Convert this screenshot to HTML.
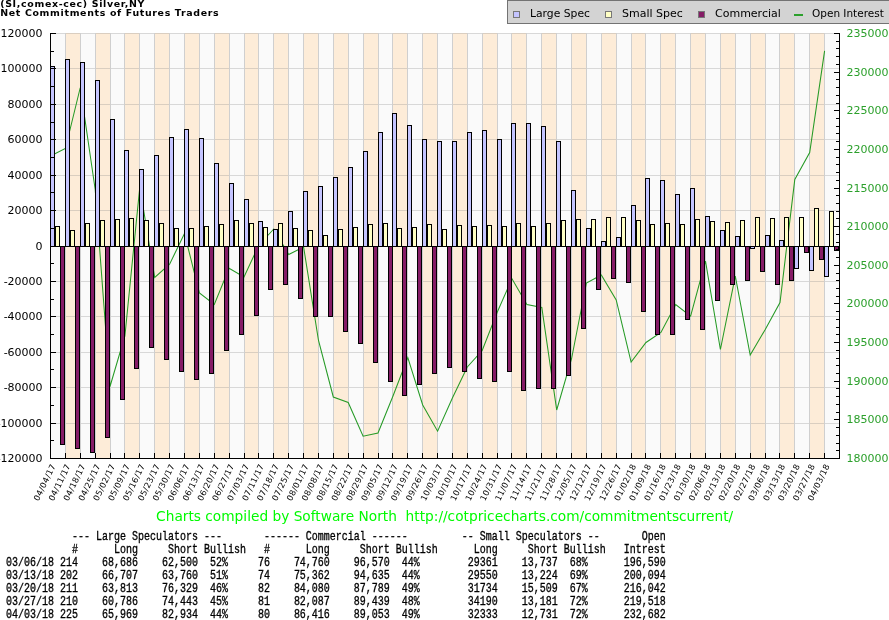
<!DOCTYPE html>
<html><head><meta charset="utf-8"><title>Silver COT</title>
<style>
html,body{margin:0;padding:0;background:#fff}
body{width:889px;height:620px;overflow:hidden;position:relative}
svg{position:absolute;left:0;top:0;will-change:transform}
text{font-family:"DejaVu Sans","Liberation Sans",sans-serif}
.ax{font-size:11px}
.xl{font-size:8.3px;letter-spacing:0.3px}
.tb{position:absolute;left:0;top:530px;margin:0;font-family:"Liberation Mono","DejaVu Sans Mono",monospace;font-size:13.6px;line-height:13px;white-space:pre;color:#000;-webkit-text-stroke:0.35px #000;transform:scaleX(0.7352);transform-origin:0 0}
</style></head><body>
<svg width="889" height="620" viewBox="0 0 889 620">
<rect width="889" height="620" fill="#fff"/>
<g shape-rendering="crispEdges">
<rect x="50" y="33" width="15" height="425" fill="#fafafa"/>
<rect x="65" y="33" width="15" height="425" fill="#fdecd8"/>
<rect x="80" y="33" width="15" height="425" fill="#fafafa"/>
<rect x="95" y="33" width="15" height="425" fill="#fdecd8"/>
<rect x="110" y="33" width="14" height="425" fill="#fafafa"/>
<rect x="124" y="33" width="15" height="425" fill="#fdecd8"/>
<rect x="139" y="33" width="15" height="425" fill="#fafafa"/>
<rect x="154" y="33" width="15" height="425" fill="#fdecd8"/>
<rect x="169" y="33" width="15" height="425" fill="#fafafa"/>
<rect x="184" y="33" width="15" height="425" fill="#fdecd8"/>
<rect x="199" y="33" width="15" height="425" fill="#fafafa"/>
<rect x="214" y="33" width="15" height="425" fill="#fdecd8"/>
<rect x="229" y="33" width="15" height="425" fill="#fafafa"/>
<rect x="244" y="33" width="14" height="425" fill="#fdecd8"/>
<rect x="258" y="33" width="15" height="425" fill="#fafafa"/>
<rect x="273" y="33" width="15" height="425" fill="#fdecd8"/>
<rect x="288" y="33" width="15" height="425" fill="#fafafa"/>
<rect x="303" y="33" width="15" height="425" fill="#fdecd8"/>
<rect x="318" y="33" width="15" height="425" fill="#fafafa"/>
<rect x="333" y="33" width="15" height="425" fill="#fdecd8"/>
<rect x="348" y="33" width="15" height="425" fill="#fafafa"/>
<rect x="363" y="33" width="15" height="425" fill="#fdecd8"/>
<rect x="378" y="33" width="14" height="425" fill="#fafafa"/>
<rect x="392" y="33" width="15" height="425" fill="#fdecd8"/>
<rect x="407" y="33" width="15" height="425" fill="#fafafa"/>
<rect x="422" y="33" width="15" height="425" fill="#fdecd8"/>
<rect x="437" y="33" width="15" height="425" fill="#fafafa"/>
<rect x="452" y="33" width="15" height="425" fill="#fdecd8"/>
<rect x="467" y="33" width="15" height="425" fill="#fafafa"/>
<rect x="482" y="33" width="15" height="425" fill="#fdecd8"/>
<rect x="497" y="33" width="14" height="425" fill="#fafafa"/>
<rect x="511" y="33" width="15" height="425" fill="#fdecd8"/>
<rect x="526" y="33" width="15" height="425" fill="#fafafa"/>
<rect x="541" y="33" width="15" height="425" fill="#fdecd8"/>
<rect x="556" y="33" width="15" height="425" fill="#fafafa"/>
<rect x="571" y="33" width="15" height="425" fill="#fdecd8"/>
<rect x="586" y="33" width="15" height="425" fill="#fafafa"/>
<rect x="601" y="33" width="15" height="425" fill="#fdecd8"/>
<rect x="616" y="33" width="15" height="425" fill="#fafafa"/>
<rect x="631" y="33" width="14" height="425" fill="#fdecd8"/>
<rect x="645" y="33" width="15" height="425" fill="#fafafa"/>
<rect x="660" y="33" width="15" height="425" fill="#fdecd8"/>
<rect x="675" y="33" width="15" height="425" fill="#fafafa"/>
<rect x="690" y="33" width="15" height="425" fill="#fdecd8"/>
<rect x="705" y="33" width="15" height="425" fill="#fafafa"/>
<rect x="720" y="33" width="15" height="425" fill="#fdecd8"/>
<rect x="735" y="33" width="15" height="425" fill="#fafafa"/>
<rect x="750" y="33" width="15" height="425" fill="#fdecd8"/>
<rect x="765" y="33" width="14" height="425" fill="#fafafa"/>
<rect x="779" y="33" width="15" height="425" fill="#fdecd8"/>
<rect x="794" y="33" width="15" height="425" fill="#fafafa"/>
<rect x="809" y="33" width="15" height="425" fill="#fdecd8"/>
<rect x="824" y="33" width="15" height="425" fill="#fafafa"/>
<rect x="50" y="33" width="789" height="1" fill="#808080" fill-opacity="0.28"/>
<rect x="50" y="68" width="789" height="1" fill="#808080" fill-opacity="0.28"/>
<rect x="50" y="104" width="789" height="1" fill="#808080" fill-opacity="0.28"/>
<rect x="50" y="139" width="789" height="1" fill="#808080" fill-opacity="0.28"/>
<rect x="50" y="175" width="789" height="1" fill="#808080" fill-opacity="0.28"/>
<rect x="50" y="210" width="789" height="1" fill="#808080" fill-opacity="0.28"/>
<rect x="50" y="246" width="789" height="1" fill="#808080" fill-opacity="0.28"/>
<rect x="50" y="281" width="789" height="1" fill="#808080" fill-opacity="0.28"/>
<rect x="50" y="316" width="789" height="1" fill="#808080" fill-opacity="0.28"/>
<rect x="50" y="352" width="789" height="1" fill="#808080" fill-opacity="0.28"/>
<rect x="50" y="387" width="789" height="1" fill="#808080" fill-opacity="0.28"/>
<rect x="50" y="423" width="789" height="1" fill="#808080" fill-opacity="0.28"/>
<rect x="50" y="458" width="789" height="1" fill="#808080" fill-opacity="0.28"/>
<rect x="65" y="33" width="1" height="425" fill="#cfcfcf"/>
<rect x="80" y="33" width="1" height="425" fill="#cfcfcf"/>
<rect x="95" y="33" width="1" height="425" fill="#cfcfcf"/>
<rect x="110" y="33" width="1" height="425" fill="#cfcfcf"/>
<rect x="124" y="33" width="1" height="425" fill="#cfcfcf"/>
<rect x="139" y="33" width="1" height="425" fill="#cfcfcf"/>
<rect x="154" y="33" width="1" height="425" fill="#cfcfcf"/>
<rect x="169" y="33" width="1" height="425" fill="#cfcfcf"/>
<rect x="184" y="33" width="1" height="425" fill="#cfcfcf"/>
<rect x="199" y="33" width="1" height="425" fill="#cfcfcf"/>
<rect x="214" y="33" width="1" height="425" fill="#cfcfcf"/>
<rect x="229" y="33" width="1" height="425" fill="#cfcfcf"/>
<rect x="244" y="33" width="1" height="425" fill="#cfcfcf"/>
<rect x="258" y="33" width="1" height="425" fill="#cfcfcf"/>
<rect x="273" y="33" width="1" height="425" fill="#cfcfcf"/>
<rect x="288" y="33" width="1" height="425" fill="#cfcfcf"/>
<rect x="303" y="33" width="1" height="425" fill="#cfcfcf"/>
<rect x="318" y="33" width="1" height="425" fill="#cfcfcf"/>
<rect x="333" y="33" width="1" height="425" fill="#cfcfcf"/>
<rect x="348" y="33" width="1" height="425" fill="#cfcfcf"/>
<rect x="363" y="33" width="1" height="425" fill="#cfcfcf"/>
<rect x="378" y="33" width="1" height="425" fill="#cfcfcf"/>
<rect x="392" y="33" width="1" height="425" fill="#cfcfcf"/>
<rect x="407" y="33" width="1" height="425" fill="#cfcfcf"/>
<rect x="422" y="33" width="1" height="425" fill="#cfcfcf"/>
<rect x="437" y="33" width="1" height="425" fill="#cfcfcf"/>
<rect x="452" y="33" width="1" height="425" fill="#cfcfcf"/>
<rect x="467" y="33" width="1" height="425" fill="#cfcfcf"/>
<rect x="482" y="33" width="1" height="425" fill="#cfcfcf"/>
<rect x="497" y="33" width="1" height="425" fill="#cfcfcf"/>
<rect x="511" y="33" width="1" height="425" fill="#cfcfcf"/>
<rect x="526" y="33" width="1" height="425" fill="#cfcfcf"/>
<rect x="541" y="33" width="1" height="425" fill="#cfcfcf"/>
<rect x="556" y="33" width="1" height="425" fill="#cfcfcf"/>
<rect x="571" y="33" width="1" height="425" fill="#cfcfcf"/>
<rect x="586" y="33" width="1" height="425" fill="#cfcfcf"/>
<rect x="601" y="33" width="1" height="425" fill="#cfcfcf"/>
<rect x="616" y="33" width="1" height="425" fill="#cfcfcf"/>
<rect x="631" y="33" width="1" height="425" fill="#cfcfcf"/>
<rect x="645" y="33" width="1" height="425" fill="#cfcfcf"/>
<rect x="660" y="33" width="1" height="425" fill="#cfcfcf"/>
<rect x="675" y="33" width="1" height="425" fill="#cfcfcf"/>
<rect x="690" y="33" width="1" height="425" fill="#cfcfcf"/>
<rect x="705" y="33" width="1" height="425" fill="#cfcfcf"/>
<rect x="720" y="33" width="1" height="425" fill="#cfcfcf"/>
<rect x="735" y="33" width="1" height="425" fill="#cfcfcf"/>
<rect x="750" y="33" width="1" height="425" fill="#cfcfcf"/>
<rect x="765" y="33" width="1" height="425" fill="#cfcfcf"/>
<rect x="779" y="33" width="1" height="425" fill="#cfcfcf"/>
<rect x="794" y="33" width="1" height="425" fill="#cfcfcf"/>
<rect x="809" y="33" width="1" height="425" fill="#cfcfcf"/>
<rect x="824" y="33" width="1" height="425" fill="#cfcfcf"/>
</g>
<polyline points="50.5,156.0 65.4,148.5 80.3,87.5 95.2,189.5 110.0,386.5 124.9,336.0 139.8,187.0 154.7,277.5 169.6,264.2 184.5,233.5 199.4,293.0 214.3,304.5 229.1,268.2 244.0,277.0 258.9,245.0 273.8,229.0 288.7,254.5 303.6,247.0 318.5,340.5 333.3,397.0 348.2,402.5 363.1,436.2 378.0,433.0 392.9,396.2 407.8,357.5 422.7,405.0 437.6,431.2 452.4,398.0 467.3,367.0 482.2,350.5 497.1,312.5 512.0,278.8 526.9,304.5 541.8,307.5 556.7,410.0 571.5,359.0 586.4,283.0 601.3,275.0 616.2,300.0 631.1,362.0 646.0,342.5 660.9,332.5 675.7,304.5 690.6,316.2 705.5,261.2 720.4,349.5 735.3,276.2 750.2,355.0 765.1,329.7 780.0,302.5 794.8,179.5 809.7,152.6 824.6,50.9" fill="none" stroke="#259a25" stroke-width="1.05"/>
<g shape-rendering="crispEdges" stroke="#000" stroke-width="1">
<rect x="50.5" y="66.5" width="4" height="180" fill="#c4c4ff"/>
<rect x="55.5" y="226.5" width="4" height="20" fill="#ffffc4"/>
<rect x="60.5" y="246.5" width="4" height="198" fill="#851c66"/>
<rect x="65.5" y="59.5" width="4" height="187" fill="#c4c4ff"/>
<rect x="70.5" y="230.5" width="4" height="16" fill="#ffffc4"/>
<rect x="75.5" y="246.5" width="4" height="202" fill="#851c66"/>
<rect x="80.5" y="62.5" width="4" height="184" fill="#c4c4ff"/>
<rect x="85.5" y="223.5" width="4" height="23" fill="#ffffc4"/>
<rect x="90.5" y="246.5" width="4" height="206" fill="#851c66"/>
<rect x="95.5" y="80.5" width="4" height="166" fill="#c4c4ff"/>
<rect x="100.5" y="220.5" width="4" height="26" fill="#ffffc4"/>
<rect x="105.5" y="246.5" width="4" height="191" fill="#851c66"/>
<rect x="110.5" y="119.5" width="4" height="127" fill="#c4c4ff"/>
<rect x="115.5" y="219.5" width="4" height="27" fill="#ffffc4"/>
<rect x="120.5" y="246.5" width="4" height="153" fill="#851c66"/>
<rect x="124.5" y="150.5" width="4" height="96" fill="#c4c4ff"/>
<rect x="129.5" y="218.5" width="4" height="28" fill="#ffffc4"/>
<rect x="134.5" y="246.5" width="4" height="122" fill="#851c66"/>
<rect x="139.5" y="169.5" width="4" height="77" fill="#c4c4ff"/>
<rect x="144.5" y="220.5" width="4" height="26" fill="#ffffc4"/>
<rect x="149.5" y="246.5" width="4" height="101" fill="#851c66"/>
<rect x="154.5" y="155.5" width="4" height="91" fill="#c4c4ff"/>
<rect x="159.5" y="223.5" width="4" height="23" fill="#ffffc4"/>
<rect x="164.5" y="246.5" width="4" height="113" fill="#851c66"/>
<rect x="169.5" y="137.5" width="4" height="109" fill="#c4c4ff"/>
<rect x="174.5" y="228.5" width="4" height="18" fill="#ffffc4"/>
<rect x="179.5" y="246.5" width="4" height="125" fill="#851c66"/>
<rect x="184.5" y="129.5" width="4" height="117" fill="#c4c4ff"/>
<rect x="189.5" y="228.5" width="4" height="18" fill="#ffffc4"/>
<rect x="194.5" y="246.5" width="4" height="133" fill="#851c66"/>
<rect x="199.5" y="138.5" width="4" height="108" fill="#c4c4ff"/>
<rect x="204.5" y="226.5" width="4" height="20" fill="#ffffc4"/>
<rect x="209.5" y="246.5" width="4" height="127" fill="#851c66"/>
<rect x="214.5" y="163.5" width="4" height="83" fill="#c4c4ff"/>
<rect x="219.5" y="224.5" width="4" height="22" fill="#ffffc4"/>
<rect x="224.5" y="246.5" width="4" height="104" fill="#851c66"/>
<rect x="229.5" y="183.5" width="4" height="63" fill="#c4c4ff"/>
<rect x="234.5" y="220.5" width="4" height="26" fill="#ffffc4"/>
<rect x="239.5" y="246.5" width="4" height="88" fill="#851c66"/>
<rect x="244.5" y="199.5" width="4" height="47" fill="#c4c4ff"/>
<rect x="249.5" y="223.5" width="4" height="23" fill="#ffffc4"/>
<rect x="254.5" y="246.5" width="4" height="69" fill="#851c66"/>
<rect x="258.5" y="221.5" width="4" height="25" fill="#c4c4ff"/>
<rect x="263.5" y="227.5" width="4" height="19" fill="#ffffc4"/>
<rect x="268.5" y="246.5" width="4" height="43" fill="#851c66"/>
<rect x="273.5" y="229.5" width="4" height="17" fill="#c4c4ff"/>
<rect x="278.5" y="223.5" width="4" height="23" fill="#ffffc4"/>
<rect x="283.5" y="246.5" width="4" height="38" fill="#851c66"/>
<rect x="288.5" y="211.5" width="4" height="35" fill="#c4c4ff"/>
<rect x="293.5" y="228.5" width="4" height="18" fill="#ffffc4"/>
<rect x="298.5" y="246.5" width="4" height="52" fill="#851c66"/>
<rect x="303.5" y="191.5" width="4" height="55" fill="#c4c4ff"/>
<rect x="308.5" y="230.5" width="4" height="16" fill="#ffffc4"/>
<rect x="313.5" y="246.5" width="4" height="70" fill="#851c66"/>
<rect x="318.5" y="186.5" width="4" height="60" fill="#c4c4ff"/>
<rect x="323.5" y="235.5" width="4" height="11" fill="#ffffc4"/>
<rect x="328.5" y="246.5" width="4" height="70" fill="#851c66"/>
<rect x="333.5" y="177.5" width="4" height="69" fill="#c4c4ff"/>
<rect x="338.5" y="229.5" width="4" height="17" fill="#ffffc4"/>
<rect x="343.5" y="246.5" width="4" height="85" fill="#851c66"/>
<rect x="348.5" y="167.5" width="4" height="79" fill="#c4c4ff"/>
<rect x="353.5" y="227.5" width="4" height="19" fill="#ffffc4"/>
<rect x="358.5" y="246.5" width="4" height="97" fill="#851c66"/>
<rect x="363.5" y="151.5" width="4" height="95" fill="#c4c4ff"/>
<rect x="368.5" y="224.5" width="4" height="22" fill="#ffffc4"/>
<rect x="373.5" y="246.5" width="4" height="116" fill="#851c66"/>
<rect x="378.5" y="132.5" width="4" height="114" fill="#c4c4ff"/>
<rect x="383.5" y="223.5" width="4" height="23" fill="#ffffc4"/>
<rect x="388.5" y="246.5" width="4" height="135" fill="#851c66"/>
<rect x="392.5" y="113.5" width="4" height="133" fill="#c4c4ff"/>
<rect x="397.5" y="228.5" width="4" height="18" fill="#ffffc4"/>
<rect x="402.5" y="246.5" width="4" height="149" fill="#851c66"/>
<rect x="407.5" y="125.5" width="4" height="121" fill="#c4c4ff"/>
<rect x="412.5" y="227.5" width="4" height="19" fill="#ffffc4"/>
<rect x="417.5" y="246.5" width="4" height="138" fill="#851c66"/>
<rect x="422.5" y="139.5" width="4" height="107" fill="#c4c4ff"/>
<rect x="427.5" y="224.5" width="4" height="22" fill="#ffffc4"/>
<rect x="432.5" y="246.5" width="4" height="127" fill="#851c66"/>
<rect x="437.5" y="141.5" width="4" height="105" fill="#c4c4ff"/>
<rect x="442.5" y="229.5" width="4" height="17" fill="#ffffc4"/>
<rect x="447.5" y="246.5" width="4" height="121" fill="#851c66"/>
<rect x="452.5" y="141.5" width="4" height="105" fill="#c4c4ff"/>
<rect x="457.5" y="225.5" width="4" height="21" fill="#ffffc4"/>
<rect x="462.5" y="246.5" width="4" height="125" fill="#851c66"/>
<rect x="467.5" y="132.5" width="4" height="114" fill="#c4c4ff"/>
<rect x="472.5" y="226.5" width="4" height="20" fill="#ffffc4"/>
<rect x="477.5" y="246.5" width="4" height="132" fill="#851c66"/>
<rect x="482.5" y="130.5" width="4" height="116" fill="#c4c4ff"/>
<rect x="487.5" y="225.5" width="4" height="21" fill="#ffffc4"/>
<rect x="492.5" y="246.5" width="4" height="135" fill="#851c66"/>
<rect x="497.5" y="139.5" width="4" height="107" fill="#c4c4ff"/>
<rect x="502.5" y="226.5" width="4" height="20" fill="#ffffc4"/>
<rect x="507.5" y="246.5" width="4" height="125" fill="#851c66"/>
<rect x="511.5" y="123.5" width="4" height="123" fill="#c4c4ff"/>
<rect x="516.5" y="223.5" width="4" height="23" fill="#ffffc4"/>
<rect x="521.5" y="246.5" width="4" height="144" fill="#851c66"/>
<rect x="526.5" y="123.5" width="4" height="123" fill="#c4c4ff"/>
<rect x="531.5" y="226.5" width="4" height="20" fill="#ffffc4"/>
<rect x="536.5" y="246.5" width="4" height="142" fill="#851c66"/>
<rect x="541.5" y="126.5" width="4" height="120" fill="#c4c4ff"/>
<rect x="546.5" y="223.5" width="4" height="23" fill="#ffffc4"/>
<rect x="551.5" y="246.5" width="4" height="142" fill="#851c66"/>
<rect x="556.5" y="141.5" width="4" height="105" fill="#c4c4ff"/>
<rect x="561.5" y="220.5" width="4" height="26" fill="#ffffc4"/>
<rect x="566.5" y="246.5" width="4" height="129" fill="#851c66"/>
<rect x="571.5" y="190.5" width="4" height="56" fill="#c4c4ff"/>
<rect x="576.5" y="219.5" width="4" height="27" fill="#ffffc4"/>
<rect x="581.5" y="246.5" width="4" height="82" fill="#851c66"/>
<rect x="586.5" y="228.5" width="4" height="18" fill="#c4c4ff"/>
<rect x="591.5" y="219.5" width="4" height="27" fill="#ffffc4"/>
<rect x="596.5" y="246.5" width="4" height="43" fill="#851c66"/>
<rect x="601.5" y="241.5" width="4" height="5" fill="#c4c4ff"/>
<rect x="606.5" y="217.5" width="4" height="29" fill="#ffffc4"/>
<rect x="611.5" y="246.5" width="4" height="32" fill="#851c66"/>
<rect x="616.5" y="237.5" width="4" height="9" fill="#c4c4ff"/>
<rect x="621.5" y="217.5" width="4" height="29" fill="#ffffc4"/>
<rect x="626.5" y="246.5" width="4" height="36" fill="#851c66"/>
<rect x="631.5" y="205.5" width="4" height="41" fill="#c4c4ff"/>
<rect x="636.5" y="220.5" width="4" height="26" fill="#ffffc4"/>
<rect x="641.5" y="246.5" width="4" height="65" fill="#851c66"/>
<rect x="645.5" y="178.5" width="4" height="68" fill="#c4c4ff"/>
<rect x="650.5" y="224.5" width="4" height="22" fill="#ffffc4"/>
<rect x="655.5" y="246.5" width="4" height="88" fill="#851c66"/>
<rect x="660.5" y="180.5" width="4" height="66" fill="#c4c4ff"/>
<rect x="665.5" y="223.5" width="4" height="23" fill="#ffffc4"/>
<rect x="670.5" y="246.5" width="4" height="88" fill="#851c66"/>
<rect x="675.5" y="194.5" width="4" height="52" fill="#c4c4ff"/>
<rect x="680.5" y="224.5" width="4" height="22" fill="#ffffc4"/>
<rect x="685.5" y="246.5" width="4" height="73" fill="#851c66"/>
<rect x="690.5" y="188.5" width="4" height="58" fill="#c4c4ff"/>
<rect x="695.5" y="219.5" width="4" height="27" fill="#ffffc4"/>
<rect x="700.5" y="246.5" width="4" height="83" fill="#851c66"/>
<rect x="705.5" y="216.5" width="4" height="30" fill="#c4c4ff"/>
<rect x="710.5" y="221.5" width="4" height="25" fill="#ffffc4"/>
<rect x="715.5" y="246.5" width="4" height="54" fill="#851c66"/>
<rect x="720.5" y="230.5" width="4" height="16" fill="#c4c4ff"/>
<rect x="725.5" y="222.5" width="4" height="24" fill="#ffffc4"/>
<rect x="730.5" y="246.5" width="4" height="38" fill="#851c66"/>
<rect x="735.5" y="236.5" width="4" height="10" fill="#c4c4ff"/>
<rect x="740.5" y="220.5" width="4" height="26" fill="#ffffc4"/>
<rect x="745.5" y="246.5" width="4" height="34" fill="#851c66"/>
<rect x="750.5" y="246.5" width="4" height="2" fill="#c4c4ff"/>
<rect x="755.5" y="217.5" width="4" height="29" fill="#ffffc4"/>
<rect x="760.5" y="246.5" width="4" height="25" fill="#851c66"/>
<rect x="765.5" y="235.5" width="4" height="11" fill="#c4c4ff"/>
<rect x="770.5" y="218.5" width="4" height="28" fill="#ffffc4"/>
<rect x="775.5" y="246.5" width="4" height="38" fill="#851c66"/>
<rect x="779.5" y="240.5" width="4" height="6" fill="#c4c4ff"/>
<rect x="784.5" y="217.5" width="4" height="29" fill="#ffffc4"/>
<rect x="789.5" y="246.5" width="4" height="34" fill="#851c66"/>
<rect x="794.5" y="246.5" width="4" height="22" fill="#c4c4ff"/>
<rect x="799.5" y="217.5" width="4" height="29" fill="#ffffc4"/>
<rect x="804.5" y="246.5" width="4" height="6" fill="#851c66"/>
<rect x="809.5" y="246.5" width="4" height="24" fill="#c4c4ff"/>
<rect x="814.5" y="208.5" width="4" height="38" fill="#ffffc4"/>
<rect x="819.5" y="246.5" width="4" height="13" fill="#851c66"/>
<rect x="824.5" y="246.5" width="4" height="30" fill="#c4c4ff"/>
<rect x="829.5" y="211.5" width="4" height="35" fill="#ffffc4"/>
<rect x="834.5" y="246.5" width="4" height="4" fill="#851c66"/>
</g>
<g shape-rendering="crispEdges" fill="#000">
<rect x="50" y="246" width="789" height="1"/>
<rect x="50" y="33" width="1" height="426"/>
<rect x="50" y="458" width="790" height="1"/>
<rect x="839" y="33" width="1" height="426"/>
<rect x="51" y="33" width="5" height="1"/>
<rect x="51" y="51" width="3" height="1"/>
<rect x="51" y="68" width="5" height="1"/>
<rect x="51" y="86" width="3" height="1"/>
<rect x="51" y="104" width="5" height="1"/>
<rect x="51" y="122" width="3" height="1"/>
<rect x="51" y="139" width="5" height="1"/>
<rect x="51" y="157" width="3" height="1"/>
<rect x="51" y="175" width="5" height="1"/>
<rect x="51" y="192" width="3" height="1"/>
<rect x="51" y="210" width="5" height="1"/>
<rect x="51" y="228" width="3" height="1"/>
<rect x="51" y="246" width="5" height="1"/>
<rect x="51" y="263" width="3" height="1"/>
<rect x="51" y="281" width="5" height="1"/>
<rect x="51" y="299" width="3" height="1"/>
<rect x="51" y="316" width="5" height="1"/>
<rect x="51" y="334" width="3" height="1"/>
<rect x="51" y="352" width="5" height="1"/>
<rect x="51" y="369" width="3" height="1"/>
<rect x="51" y="387" width="5" height="1"/>
<rect x="51" y="405" width="3" height="1"/>
<rect x="51" y="423" width="5" height="1"/>
<rect x="51" y="440" width="3" height="1"/>
<rect x="51" y="458" width="5" height="1"/>
<rect x="834" y="33" width="5" height="1"/>
<rect x="836" y="41" width="3" height="1"/>
<rect x="836" y="48" width="3" height="1"/>
<rect x="836" y="56" width="3" height="1"/>
<rect x="836" y="64" width="3" height="1"/>
<rect x="834" y="72" width="5" height="1"/>
<rect x="836" y="79" width="3" height="1"/>
<rect x="836" y="87" width="3" height="1"/>
<rect x="836" y="95" width="3" height="1"/>
<rect x="836" y="103" width="3" height="1"/>
<rect x="834" y="110" width="5" height="1"/>
<rect x="836" y="118" width="3" height="1"/>
<rect x="836" y="126" width="3" height="1"/>
<rect x="836" y="133" width="3" height="1"/>
<rect x="836" y="141" width="3" height="1"/>
<rect x="834" y="149" width="5" height="1"/>
<rect x="836" y="157" width="3" height="1"/>
<rect x="836" y="164" width="3" height="1"/>
<rect x="836" y="172" width="3" height="1"/>
<rect x="836" y="180" width="3" height="1"/>
<rect x="834" y="188" width="5" height="1"/>
<rect x="836" y="195" width="3" height="1"/>
<rect x="836" y="203" width="3" height="1"/>
<rect x="836" y="211" width="3" height="1"/>
<rect x="836" y="218" width="3" height="1"/>
<rect x="834" y="226" width="5" height="1"/>
<rect x="836" y="234" width="3" height="1"/>
<rect x="836" y="242" width="3" height="1"/>
<rect x="836" y="249" width="3" height="1"/>
<rect x="836" y="257" width="3" height="1"/>
<rect x="834" y="265" width="5" height="1"/>
<rect x="836" y="273" width="3" height="1"/>
<rect x="836" y="280" width="3" height="1"/>
<rect x="836" y="288" width="3" height="1"/>
<rect x="836" y="296" width="3" height="1"/>
<rect x="834" y="303" width="5" height="1"/>
<rect x="836" y="311" width="3" height="1"/>
<rect x="836" y="319" width="3" height="1"/>
<rect x="836" y="327" width="3" height="1"/>
<rect x="836" y="334" width="3" height="1"/>
<rect x="834" y="342" width="5" height="1"/>
<rect x="836" y="350" width="3" height="1"/>
<rect x="836" y="358" width="3" height="1"/>
<rect x="836" y="365" width="3" height="1"/>
<rect x="836" y="373" width="3" height="1"/>
<rect x="834" y="381" width="5" height="1"/>
<rect x="836" y="388" width="3" height="1"/>
<rect x="836" y="396" width="3" height="1"/>
<rect x="836" y="404" width="3" height="1"/>
<rect x="836" y="412" width="3" height="1"/>
<rect x="834" y="419" width="5" height="1"/>
<rect x="836" y="427" width="3" height="1"/>
<rect x="836" y="435" width="3" height="1"/>
<rect x="836" y="443" width="3" height="1"/>
<rect x="836" y="450" width="3" height="1"/>
<rect x="834" y="458" width="5" height="1"/>
<rect x="65" y="453" width="1" height="5"/>
<rect x="80" y="453" width="1" height="5"/>
<rect x="95" y="453" width="1" height="5"/>
<rect x="110" y="453" width="1" height="5"/>
<rect x="124" y="453" width="1" height="5"/>
<rect x="139" y="453" width="1" height="5"/>
<rect x="154" y="453" width="1" height="5"/>
<rect x="169" y="453" width="1" height="5"/>
<rect x="184" y="453" width="1" height="5"/>
<rect x="199" y="453" width="1" height="5"/>
<rect x="214" y="453" width="1" height="5"/>
<rect x="229" y="453" width="1" height="5"/>
<rect x="244" y="453" width="1" height="5"/>
<rect x="258" y="453" width="1" height="5"/>
<rect x="273" y="453" width="1" height="5"/>
<rect x="288" y="453" width="1" height="5"/>
<rect x="303" y="453" width="1" height="5"/>
<rect x="318" y="453" width="1" height="5"/>
<rect x="333" y="453" width="1" height="5"/>
<rect x="348" y="453" width="1" height="5"/>
<rect x="363" y="453" width="1" height="5"/>
<rect x="378" y="453" width="1" height="5"/>
<rect x="392" y="453" width="1" height="5"/>
<rect x="407" y="453" width="1" height="5"/>
<rect x="422" y="453" width="1" height="5"/>
<rect x="437" y="453" width="1" height="5"/>
<rect x="452" y="453" width="1" height="5"/>
<rect x="467" y="453" width="1" height="5"/>
<rect x="482" y="453" width="1" height="5"/>
<rect x="497" y="453" width="1" height="5"/>
<rect x="511" y="453" width="1" height="5"/>
<rect x="526" y="453" width="1" height="5"/>
<rect x="541" y="453" width="1" height="5"/>
<rect x="556" y="453" width="1" height="5"/>
<rect x="571" y="453" width="1" height="5"/>
<rect x="586" y="453" width="1" height="5"/>
<rect x="601" y="453" width="1" height="5"/>
<rect x="616" y="453" width="1" height="5"/>
<rect x="631" y="453" width="1" height="5"/>
<rect x="645" y="453" width="1" height="5"/>
<rect x="660" y="453" width="1" height="5"/>
<rect x="675" y="453" width="1" height="5"/>
<rect x="690" y="453" width="1" height="5"/>
<rect x="705" y="453" width="1" height="5"/>
<rect x="720" y="453" width="1" height="5"/>
<rect x="735" y="453" width="1" height="5"/>
<rect x="750" y="453" width="1" height="5"/>
<rect x="765" y="453" width="1" height="5"/>
<rect x="779" y="453" width="1" height="5"/>
<rect x="794" y="453" width="1" height="5"/>
<rect x="809" y="453" width="1" height="5"/>
<rect x="824" y="453" width="1" height="5"/>
</g>
<text class="ax" x="42.6" y="37.0" text-anchor="end">120000</text>
<text class="ax" x="42.6" y="72.0" text-anchor="end">100000</text>
<text class="ax" x="42.6" y="108.0" text-anchor="end">80000</text>
<text class="ax" x="42.6" y="143.0" text-anchor="end">60000</text>
<text class="ax" x="42.6" y="179.0" text-anchor="end">40000</text>
<text class="ax" x="42.6" y="214.0" text-anchor="end">20000</text>
<text class="ax" x="42.6" y="250.0" text-anchor="end">0</text>
<text class="ax" x="42.6" y="285.0" text-anchor="end">-20000</text>
<text class="ax" x="42.6" y="320.0" text-anchor="end">-40000</text>
<text class="ax" x="42.6" y="356.0" text-anchor="end">-60000</text>
<text class="ax" x="42.6" y="391.0" text-anchor="end">-80000</text>
<text class="ax" x="42.6" y="427.0" text-anchor="end">-100000</text>
<text class="ax" x="42.6" y="462.0" text-anchor="end">-120000</text>
<text class="ax" x="846.4" y="37.0" fill="#2ca02c">235000</text>
<text class="ax" x="846.4" y="76.0" fill="#2ca02c">230000</text>
<text class="ax" x="846.4" y="114.0" fill="#2ca02c">225000</text>
<text class="ax" x="846.4" y="153.0" fill="#2ca02c">220000</text>
<text class="ax" x="846.4" y="192.0" fill="#2ca02c">215000</text>
<text class="ax" x="846.4" y="230.0" fill="#2ca02c">210000</text>
<text class="ax" x="846.4" y="269.0" fill="#2ca02c">205000</text>
<text class="ax" x="846.4" y="307.0" fill="#2ca02c">200000</text>
<text class="ax" x="846.4" y="346.0" fill="#2ca02c">195000</text>
<text class="ax" x="846.4" y="385.0" fill="#2ca02c">190000</text>
<text class="ax" x="846.4" y="423.0" fill="#2ca02c">185000</text>
<text class="ax" x="846.4" y="462.0" fill="#2ca02c">180000</text>
<text class="xl" transform="translate(55.9,465.8) rotate(-64)" text-anchor="end">04/04/17</text>
<text class="xl" transform="translate(70.8,465.8) rotate(-64)" text-anchor="end">04/11/17</text>
<text class="xl" transform="translate(85.7,465.8) rotate(-64)" text-anchor="end">04/18/17</text>
<text class="xl" transform="translate(100.6,465.8) rotate(-64)" text-anchor="end">04/25/17</text>
<text class="xl" transform="translate(115.4,465.8) rotate(-64)" text-anchor="end">05/02/17</text>
<text class="xl" transform="translate(130.3,465.8) rotate(-64)" text-anchor="end">05/09/17</text>
<text class="xl" transform="translate(145.2,465.8) rotate(-64)" text-anchor="end">05/16/17</text>
<text class="xl" transform="translate(160.1,465.8) rotate(-64)" text-anchor="end">05/23/17</text>
<text class="xl" transform="translate(175.0,465.8) rotate(-64)" text-anchor="end">05/30/17</text>
<text class="xl" transform="translate(189.9,465.8) rotate(-64)" text-anchor="end">06/06/17</text>
<text class="xl" transform="translate(204.8,465.8) rotate(-64)" text-anchor="end">06/13/17</text>
<text class="xl" transform="translate(219.7,465.8) rotate(-64)" text-anchor="end">06/20/17</text>
<text class="xl" transform="translate(234.5,465.8) rotate(-64)" text-anchor="end">06/27/17</text>
<text class="xl" transform="translate(249.4,465.8) rotate(-64)" text-anchor="end">07/03/17</text>
<text class="xl" transform="translate(264.3,465.8) rotate(-64)" text-anchor="end">07/11/17</text>
<text class="xl" transform="translate(279.2,465.8) rotate(-64)" text-anchor="end">07/18/17</text>
<text class="xl" transform="translate(294.1,465.8) rotate(-64)" text-anchor="end">07/25/17</text>
<text class="xl" transform="translate(309.0,465.8) rotate(-64)" text-anchor="end">08/01/17</text>
<text class="xl" transform="translate(323.9,465.8) rotate(-64)" text-anchor="end">08/08/17</text>
<text class="xl" transform="translate(338.7,465.8) rotate(-64)" text-anchor="end">08/15/17</text>
<text class="xl" transform="translate(353.6,465.8) rotate(-64)" text-anchor="end">08/22/17</text>
<text class="xl" transform="translate(368.5,465.8) rotate(-64)" text-anchor="end">08/29/17</text>
<text class="xl" transform="translate(383.4,465.8) rotate(-64)" text-anchor="end">09/05/17</text>
<text class="xl" transform="translate(398.3,465.8) rotate(-64)" text-anchor="end">09/12/17</text>
<text class="xl" transform="translate(413.2,465.8) rotate(-64)" text-anchor="end">09/19/17</text>
<text class="xl" transform="translate(428.1,465.8) rotate(-64)" text-anchor="end">09/26/17</text>
<text class="xl" transform="translate(443.0,465.8) rotate(-64)" text-anchor="end">10/03/17</text>
<text class="xl" transform="translate(457.8,465.8) rotate(-64)" text-anchor="end">10/10/17</text>
<text class="xl" transform="translate(472.7,465.8) rotate(-64)" text-anchor="end">10/17/17</text>
<text class="xl" transform="translate(487.6,465.8) rotate(-64)" text-anchor="end">10/24/17</text>
<text class="xl" transform="translate(502.5,465.8) rotate(-64)" text-anchor="end">10/31/17</text>
<text class="xl" transform="translate(517.4,465.8) rotate(-64)" text-anchor="end">11/07/17</text>
<text class="xl" transform="translate(532.3,465.8) rotate(-64)" text-anchor="end">11/14/17</text>
<text class="xl" transform="translate(547.2,465.8) rotate(-64)" text-anchor="end">11/21/17</text>
<text class="xl" transform="translate(562.1,465.8) rotate(-64)" text-anchor="end">11/28/17</text>
<text class="xl" transform="translate(576.9,465.8) rotate(-64)" text-anchor="end">12/05/17</text>
<text class="xl" transform="translate(591.8,465.8) rotate(-64)" text-anchor="end">12/12/17</text>
<text class="xl" transform="translate(606.7,465.8) rotate(-64)" text-anchor="end">12/19/17</text>
<text class="xl" transform="translate(621.6,465.8) rotate(-64)" text-anchor="end">12/26/17</text>
<text class="xl" transform="translate(636.5,465.8) rotate(-64)" text-anchor="end">01/02/18</text>
<text class="xl" transform="translate(651.4,465.8) rotate(-64)" text-anchor="end">01/09/18</text>
<text class="xl" transform="translate(666.3,465.8) rotate(-64)" text-anchor="end">01/16/18</text>
<text class="xl" transform="translate(681.1,465.8) rotate(-64)" text-anchor="end">01/23/18</text>
<text class="xl" transform="translate(696.0,465.8) rotate(-64)" text-anchor="end">01/30/18</text>
<text class="xl" transform="translate(710.9,465.8) rotate(-64)" text-anchor="end">02/06/18</text>
<text class="xl" transform="translate(725.8,465.8) rotate(-64)" text-anchor="end">02/13/18</text>
<text class="xl" transform="translate(740.7,465.8) rotate(-64)" text-anchor="end">02/20/18</text>
<text class="xl" transform="translate(755.6,465.8) rotate(-64)" text-anchor="end">02/27/18</text>
<text class="xl" transform="translate(770.5,465.8) rotate(-64)" text-anchor="end">03/06/18</text>
<text class="xl" transform="translate(785.4,465.8) rotate(-64)" text-anchor="end">03/13/18</text>
<text class="xl" transform="translate(800.2,465.8) rotate(-64)" text-anchor="end">03/20/18</text>
<text class="xl" transform="translate(815.1,465.8) rotate(-64)" text-anchor="end">03/27/18</text>
<text class="xl" transform="translate(830.0,465.8) rotate(-64)" text-anchor="end">04/03/18</text>
<g transform="translate(0.2,0) scale(1.18,1)" letter-spacing="0.56"><text x="0" y="6.8" font-size="8" font-weight="bold">(SI,comex-cec) Silver,NY</text><text x="0" y="15.8" font-size="8" font-weight="bold">Net Commitments of Futures Traders</text></g>
<g shape-rendering="crispEdges"><rect x="507.5" y="0.5" width="390" height="23" fill="#d3d3d3" stroke="#737373"/>
<rect x="513.5" y="11.5" width="6" height="6" fill="#c4c4ff" stroke="#777"/>
<rect x="605.5" y="11.5" width="6" height="6" fill="#ffffc4" stroke="#777"/>
<rect x="698.5" y="11.5" width="6" height="6" fill="#851c66" stroke="#777"/>
<rect x="794" y="14" width="9" height="2" fill="#2ca02c"/></g>
<text class="ax" x="530" y="17" textLength="60" lengthAdjust="spacingAndGlyphs">Large Spec</text>
<text class="ax" x="622" y="17">Small Spec</text>
<text class="ax" x="715" y="17">Commercial</text>
<text class="ax" x="812" y="17" textLength="71.8" lengthAdjust="spacingAndGlyphs">Open Interest</text>
<g transform="translate(156.1,521) scale(0.947,1)"><text x="0" y="0" font-size="14.5" fill="#00fa00" xml:space="preserve" style="white-space:pre">Charts compiled by Software North  http://cotpricecharts.com/commitmentscurrent/</text></g>
</svg>
<pre class="tb">            --- Large Speculators ---       ------ Commercial ------         -- Small Speculators --       Open
            #      Long     Short Bullish   #      Long     Short Bullish      Long     Short Bullish   Intrest
 03/06/18 214    68,686    62,500  52%     76    74,760    96,570  44%        29361    13,737  68%      196,590
 03/13/18 202    66,707    63,760  51%     74    75,362    94,635  44%        29550    13,224  69%      200,094
 03/20/18 211    63,813    76,329  46%     82    84,080    87,789  49%        31734    15,509  67%      216,042
 03/27/18 210    60,786    74,443  45%     81    82,087    89,439  48%        34190    13,181  72%      219,518
 04/03/18 225    65,969    82,934  44%     80    86,416    89,053  49%        32333    12,731  72%      232,682</pre>
</body></html>
